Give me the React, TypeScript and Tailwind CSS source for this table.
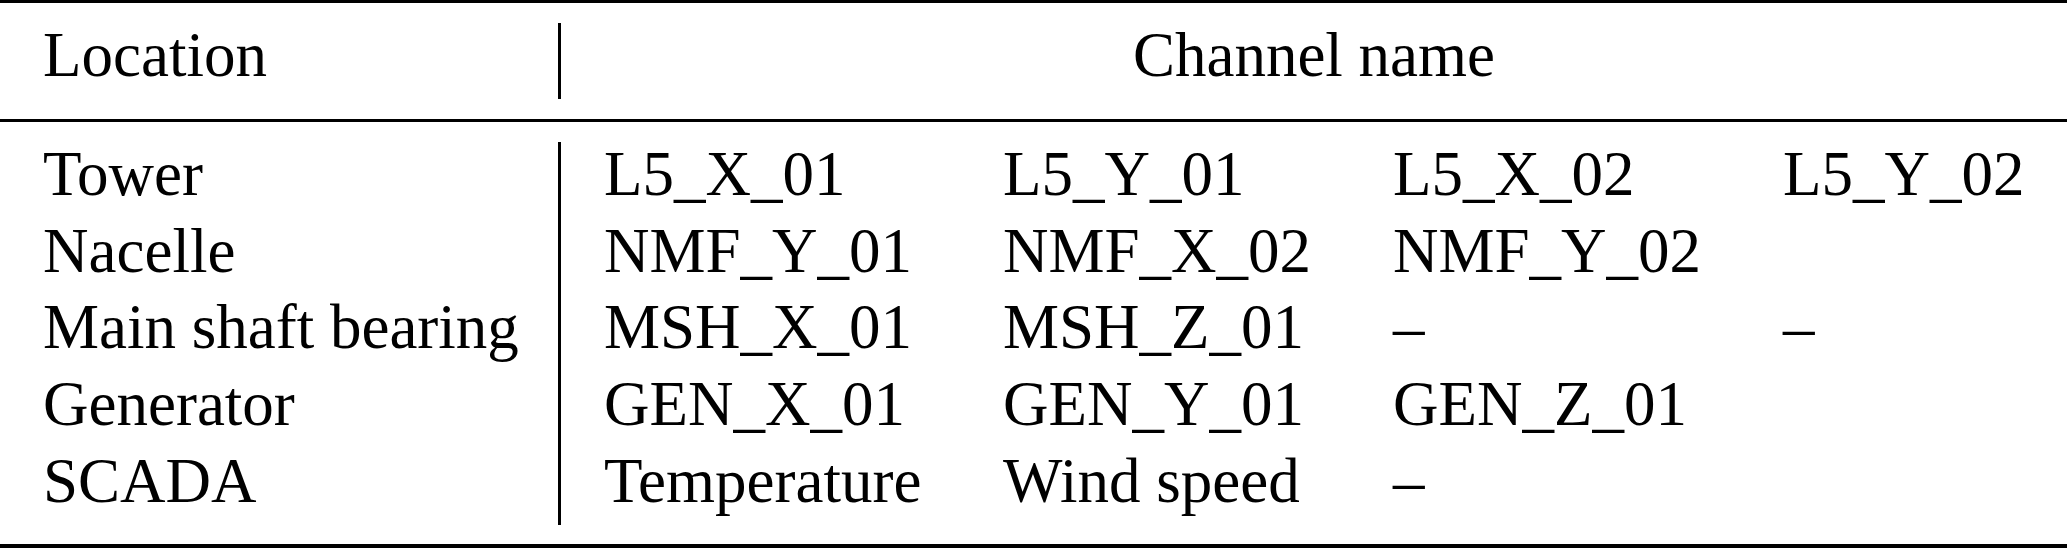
const rows = [
  { location: "Tower", channels: ["L5_X_01", "L5_Y_01", "L5_X_02", "L5_Y_02"] },
  { location: "Nacelle", channels: ["NMF_Y_01", "NMF_X_02", "NMF_Y_02", ""] },
  { location: "Main shaft bearing", channels: ["MSH_X_01", "MSH_Z_01", "–", "–"] },
  { location: "Generator", channels: ["GEN_X_01", "GEN_Y_01", "GEN_Z_01", ""] },
  { location: "SCADA", channels: ["Temperature", "Wind speed", "–", ""] },
];

const App = () => {
  return (
    <div
      className="w-[2067px] h-[549px] bg-white text-black overflow-hidden"
      style={{ fontFamily: '"Liberation Serif", "Times New Roman", serif' }}
    >
      <div className="border-t-[3px] border-black" />

      {/* header */}
      <div className="flex mt-[20px] h-[76px] text-[63px] leading-[65px]">
        <div className="w-[558px] pl-[43px] whitespace-nowrap">Location</div>
        <div className="flex-1 border-l-[3px] border-black text-center whitespace-nowrap">
          Channel name
        </div>
      </div>

      <div className="mt-[20px] border-t-[3px] border-black" />

      {/* body */}
      <div className="flex mt-[20px] text-[63px] leading-[65px]">
        <div className="w-[558px] pl-[43px]">
          {rows.map((r) => (
            <div key={r.location} className="h-[76.7px] whitespace-nowrap">
              {r.location}
            </div>
          ))}
        </div>
        <div className="flex-1 border-l-[3px] border-black pl-[43px]">
          {rows.map((r) => (
            <div
              key={r.location}
              className="grid grid-cols-[399px_390px_390px_auto] h-[76.7px]"
            >
              {r.channels.map((c, i) => (
                <div key={i} className="whitespace-nowrap">
                  {c}
                </div>
              ))}
            </div>
          ))}
        </div>
      </div>

      <div className="mt-[19px] border-t-[4px] border-black" />
    </div>
  );
};

export default App;
